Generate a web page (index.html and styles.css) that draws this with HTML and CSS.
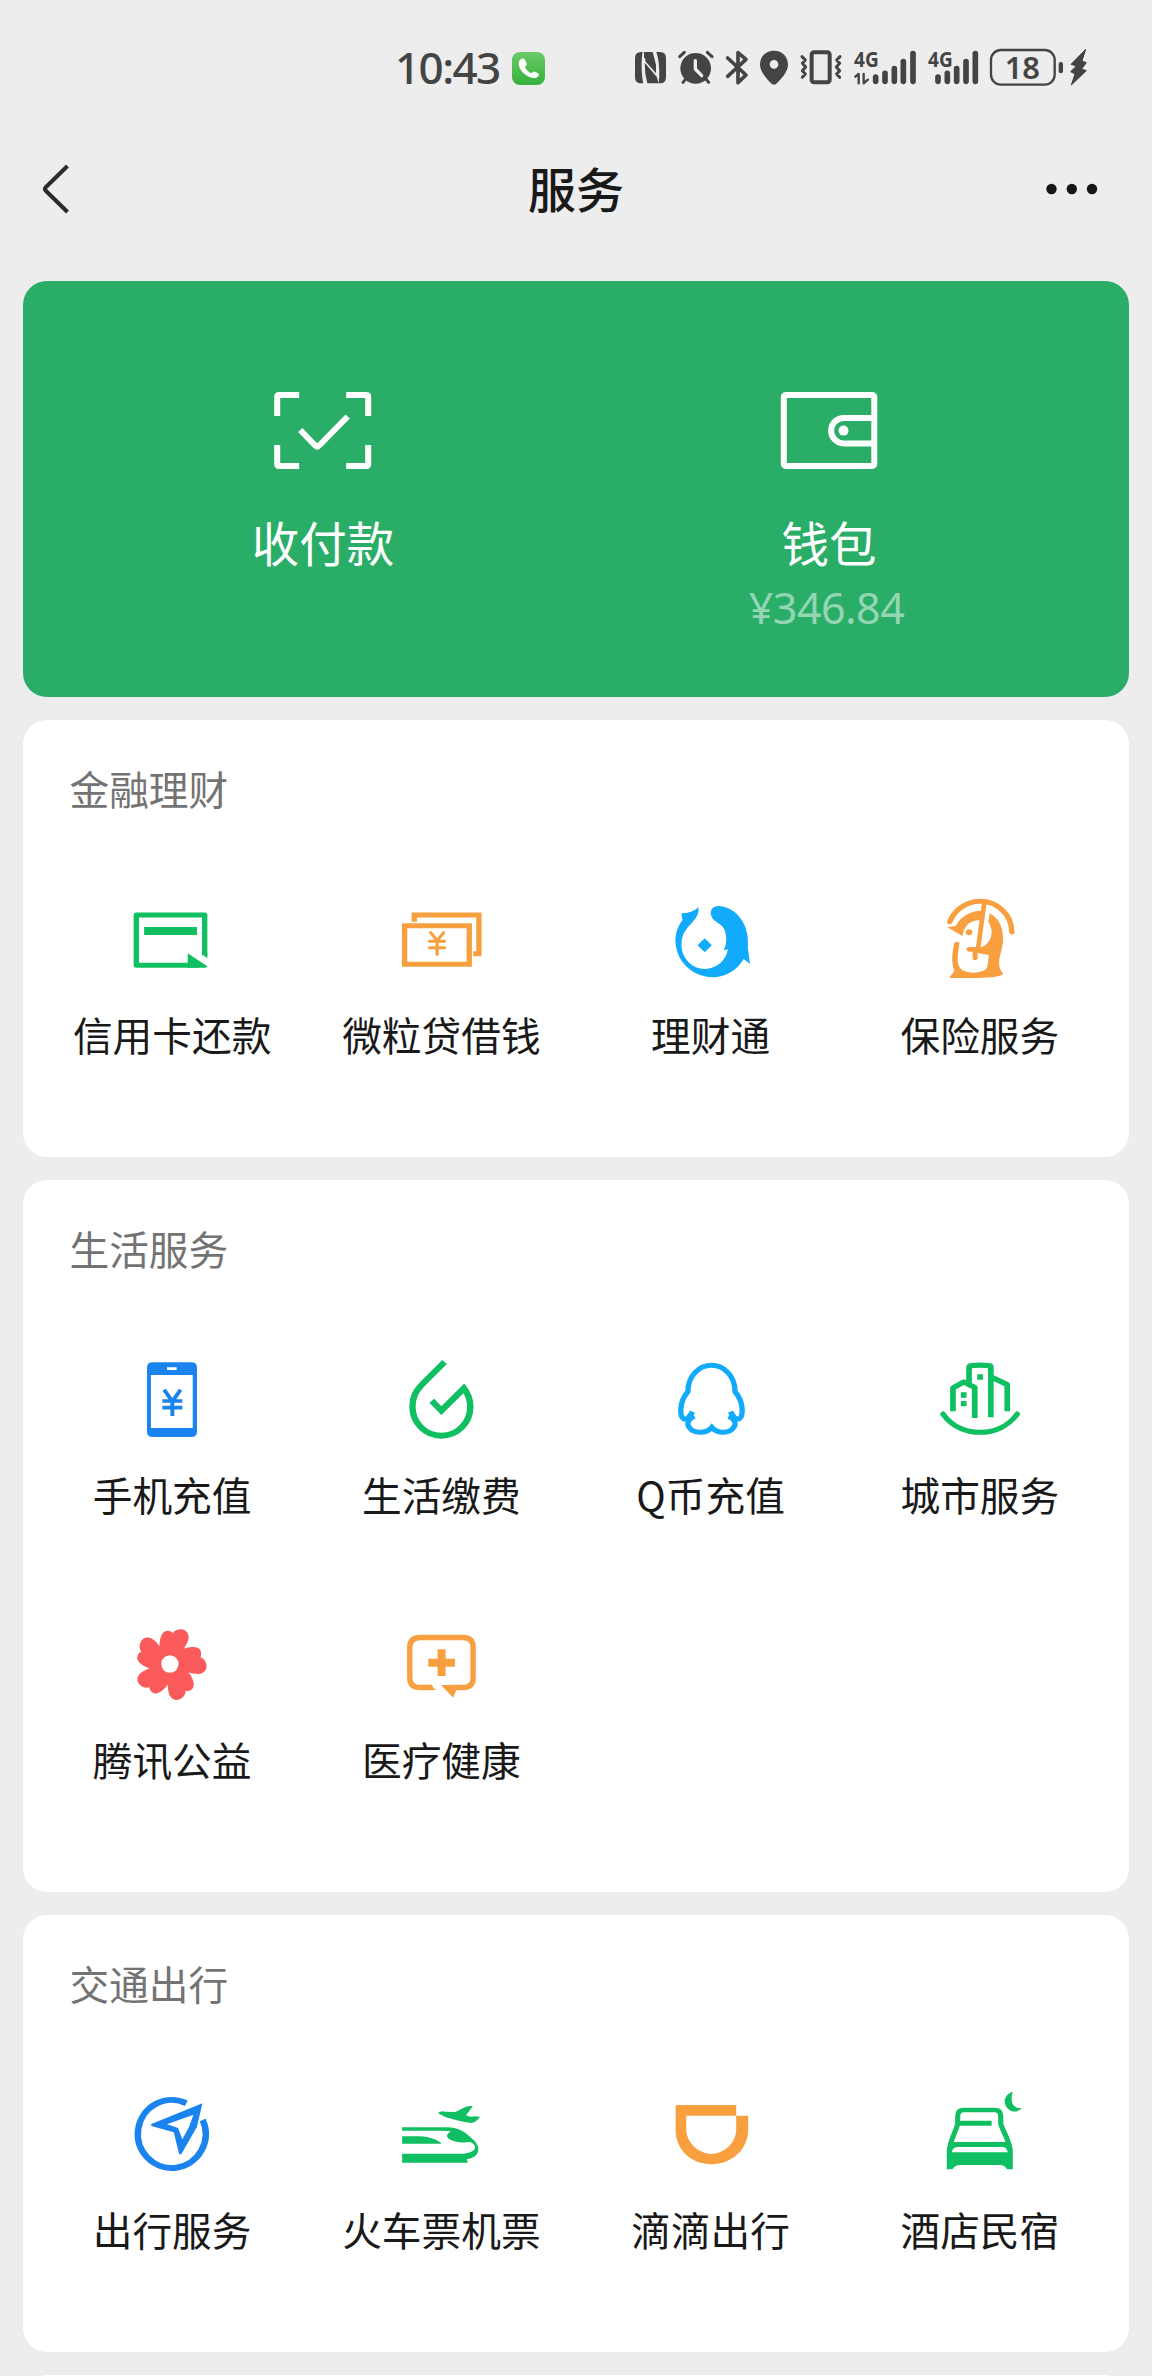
FILE: index.html
```html
<!DOCTYPE html>
<html lang="zh-CN">
<head>
<meta charset="utf-8">
<title>服务</title>
<link rel="stylesheet" href="styles.css">
</head>
<body>
<div class="page">
  <div class="status">
    <span class="clock">10:43</span>
    <svg class="call" width="33" height="40" viewBox="396 54 99 120">
      <defs><linearGradient id="call-bg" x1="0" y1="0" x2="0" y2="1"><stop offset="0" stop-color="#6ccb69"/><stop offset="1" stop-color="#35b13c"/></linearGradient></defs>
      <rect x="396" y="66" width="99" height="99" rx="24" fill="url(#call-bg)"/>
      <path fill="#fff" d="M418 92C424 84 432 84 435 90L440 101C442 106 435 108 435 112C437 118 446 127 452 129C457 129 460 123 465 125L474 130C479 134 475 142 468 144C446 148 408 118 418 92Z"/>
    </svg>
    <div class="signals">
      <svg class="nfc" width="31" height="40" viewBox="45 54 93 120">
        <path fill="#444" d="M63 66H68C63 90 64 135 70 160H63Q45 160 45 142V84Q45 66 63 66Z"/>
        <path fill="#444" d="M72 66H98L108 104V130L72 82ZM74 98L110 140L116 160H82Q74 132 74 98ZM76 84L108 124V130L76 94ZM109 66H120Q138 66 138 84V142Q138 160 120 160H116C120 130 118 92 109 66Z"/>
      </svg>
      <svg class="alarm" width="36" height="40" viewBox="175 54 108 120">
        <circle cx="228" cy="115" r="46" fill="#444"/>
        <path class="ink" stroke-width="9" d="M180 80L194 67M263 67L277 80M190 157L199 146M267 157L258 146"/>
        <path stroke="#ededed" stroke-width="10" fill="none" stroke-linecap="round" stroke-linejoin="round" d="M227 92V117L246 137"/>
      </svg>
      <svg class="bt" width="22" height="40" viewBox="318 54 66 120">
        <path class="ink" stroke-width="11" d="M323 84L378 135L354 158V68L378 88L323 139"/>
      </svg>
      <svg class="pin" width="28" height="40" viewBox="420 54 84 120">
        <path fill="#444" fill-rule="evenodd" d="M462 62C487 62 504 80 504 104C504 125 482 149 469 161Q462 166 455 161C442 149 420 125 420 104C420 80 437 62 462 62ZM462 90A13 13 0 1 0 462 116A13 13 0 1 0 462 90Z"/>
      </svg>
      <svg class="vibrate" width="42" height="40" viewBox="540 54 126 120">
        <rect x="575" y="67" width="54" height="90" rx="7" class="ink" stroke-width="12"/>
        <path class="ink" stroke-width="9" d="M546 80L556 90L547 100L557 111L547 122L556 132L547 142M660 80L650 90L659 100L649 111L659 122L650 132L659 142"/>
      </svg>
      <svg class="sig-a" width="62" height="40" viewBox="702 54 186 120">
        <text class="net" x="702" y="110" textLength="74" lengthAdjust="spacingAndGlyphs">4G</text>
        <path class="ink" stroke-width="7" d="M706 140L716 132V160M731 132V160L744 149"/>
        <path class="ink" stroke-width="17" d="M767 141V154M795 130V154M823 116V154M850 95V154M879 71V154"/>
      </svg>
      <svg class="sig-b" width="50" height="40" viewBox="924 54 150 120">
        <text class="net" x="924" y="110" textLength="74" lengthAdjust="spacingAndGlyphs">4G</text>
        <path class="ink" stroke-width="17" d="M954 141V154M982 130V154M1010 116V154M1038 95V154M1066 71V154"/>
      </svg>
      <svg class="battery" width="74" height="40" viewBox="1110 54 222 120">
        <rect x="1113" y="60" width="191" height="104" rx="30" class="ink" stroke-width="7"/>
        <rect x="1316" y="96" width="13" height="34" rx="6" fill="#444"/>
        <text class="level" x="1154" y="146" textLength="106" lengthAdjust="spacingAndGlyphs">18</text>
      </svg>
      <svg class="bolt" width="17" height="40" viewBox="1350 54 51 120">
        <path fill="#444" stroke="#444" stroke-width="3" stroke-linejoin="round" d="M1397 58L1353 103L1369 108L1352 125L1365 132L1354 165L1399 122L1385 117L1399 98L1386 93Z"/>
      </svg>
    </div>
  </div>

  <div class="navbar">
    <svg width="30" height="52" viewBox="41 163 30 52"><path fill="none" stroke="#2b2b2b" stroke-width="4" d="M67.500 166L46 187Q44 189 46 191L67.500 212"/></svg>
    <h1>服务</h1>
    <svg width="54" height="52" viewBox="1045 163 54 52"><g fill="#161616"><circle cx="1051.500" cy="189" r="5.200"/><circle cx="1071.800" cy="189" r="5.200"/><circle cx="1092" cy="189" r="5.200"/></g></svg>
  </div>

  <main class="cards">
    <section class="pay">
      <div class="pay-item">
        <svg width="100" height="80" viewBox="272.800 390 100 80"><g fill="none" stroke="#fff" stroke-width="6">
          <path d="M277 416V397Q277 395 279 395H299M346 395H366Q368 395 368 397V416M277 445V464Q277 466 279 466H299M346 466H366Q368 466 368 464V445"/>
          <path d="M300 430L315 445.500Q317 447.500 319 445.500L347.500 416.500"/></g></svg>
        <span class="pay-name">收付款</span>
      </div>
      <div class="pay-item">
        <svg width="100" height="80" viewBox="779.700 390 100 80"><g fill="none" stroke="#fff" stroke-width="6">
          <rect x="784.500" y="395" width="90.500" height="71" rx="2"/>
          <path d="M875 418H844.500A12.700 12.700 0 0 0 844.500 443.400H875"/></g><circle cx="844.200" cy="430.600" r="5" fill="#fff"/></svg>
        <span class="pay-name">钱包</span>
        <span class="balance">¥346.84</span>
      </div>
    </section>

    <section class="card">
      <h2>金融理财</h2>
      <div class="grid">
        <div class="item">
          <svg class="icon green" viewBox="300 585 252 270" preserveAspectRatio="none"><path class="line" stroke-width="15" stroke-linejoin="round" d="M517.500 766V645H326V796H500"/><path d="M510 758H525V775L510 763ZM470 760L525 799Q524 803 519 803.500H470ZM348 681H496V705H348Z"/></svg>
          <span>信用卡还款</span>
        </div>
        <div class="item">
          <svg class="icon orange" viewBox="1053.900 585 252 270" preserveAspectRatio="none"><path class="line" stroke-width="15" d="M1078 677H1259V793H1078ZM1105 665V645H1286V761H1270"/><path class="line" stroke-width="9" stroke-linecap="round" d="M1151 698L1169 722L1187 698M1169 722V763M1148 724H1190M1148 743H1190"/></svg>
          <span>微粒贷借钱</span>
        </div>
        <div class="item">
          <svg class="icon sky" viewBox="239.700 105 252 270" preserveAspectRatio="none"><path d="M283 160Q312 160 331 142Q333 165 315 185C292 210 283 225 283 255A65 72 0 0 0 348 327C382 326 408 302 413 268L401 271C412 250 409 225 403 208C395 187 365 185 365 158C366 142 378 138 390 138C435 142 470 190 469 245V265L475 312L457 297C440 330 405 352 370 352C310 350 266 300 266 240C267 215 275 195 286 180Q283 170 283 160ZM348 235L368 256L348 277L328 256Z"/></svg>
          <span>理财通</span>
        </div>
        <div class="item">
          <svg class="icon orange" viewBox="993.700 105 252 270" preserveAspectRatio="none"><path class="line" stroke-width="15" stroke-linecap="round" d="M1035 185C1050 146 1085 124 1120 124C1170 124 1208 165 1209 216"/><path class="line" stroke-width="13" d="M1132 126L1114 268"/><path class="line" stroke-width="14" stroke-linecap="round" d="M1089 268H1120M1106 270V294"/><path d="M1028 202L1052 198C1065 170 1090 152 1127 152L1124 180C1092 180 1074 197 1071 228ZM1147 160C1172 175 1185 200 1184 240C1183 280 1160 310 1185 342C1170 355 1120 354 1033 354L1048 333C1038 305 1042 275 1048 249Q1056 242 1062 249C1060 275 1050 310 1067 328C1085 342 1125 342 1138 325Q1143 312 1144 285L1100 276V262H1120C1150 255 1162 215 1143 186Z"/><circle cx="1089" cy="217" r="9"/></svg>
          <span>保险服务</span>
        </div>
      </div>
    </section>

    <section class="card tall">
      <h2>生活服务</h2>
      <div class="grid">
        <div class="item">
          <svg class="icon blue" viewBox="300 465 252 270" preserveAspectRatio="none"><path fill-rule="evenodd" d="M372 487H480Q496 487 496 503V695Q496 711 480 711H372Q356 711 356 695V503Q356 487 372 487ZM367 525V684H484V525ZM412 502V510H439V502Z"/><path class="line" stroke-width="11" d="M404 569L427 604L450 569M427 600V648M399 603H455M399 623H455"/></svg>
          <span>手机充值</span>
        </div>
        <div class="item">
          <svg class="icon green" viewBox="1053.900 465 252 270" preserveAspectRatio="none"><path class="line" stroke-width="18" d="M1190 486L1128 552C1110 572 1100 590 1100 620A81 87 0 0 0 1262 620C1262 600 1256 582 1244 565L1181 632L1154 602"/></svg>
          <span>生活缴费</span>
        </div>
        <div class="item">
          <svg class="icon sky" viewBox="239.700 105 252 270" preserveAspectRatio="none"><path class="line" stroke-width="15" stroke-linejoin="round" d="M314 275C308 288 298 299 290 297C278 290 275 248 301 215C301 168 332 136 367 136C402 136 433 168 433 215C459 248 456 290 444 297C436 299 426 288 420 275"/><path class="line" stroke-width="15" d="M319 289C300 298 298 312 304 321C316 342 352 342 368 322C384 342 418 342 430 321C436 312 434 298 415 289"/></svg>
          <span>Q币充值</span>
        </div>
        <div class="item">
          <svg class="icon green" viewBox="993.700 105 252 270" preserveAspectRatio="none"><path class="line" stroke-width="16" stroke-linejoin="round" d="M1044 274V204L1074 186L1105 202V294M1089 195V142Q1090 137 1096 137Q1120 134 1144 137Q1150 137 1150 142V292M1155 173L1196 194V274"/><path class="line" stroke-width="15" stroke-linecap="round" d="M1016 282C1040 318 1078 337 1120 337C1162 337 1200 318 1224 282"/><path d="M1112 163H1128V179H1112ZM1066 217H1082V233H1066ZM1066 243H1082V259H1066Z"/></svg>
          <span>城市服务</span>
        </div>
        <div class="item">
          <svg class="icon red" viewBox="201.300 90 270 270"><defs><path id="petal" d="M316 222L300 180C296 150 305 122 322 122C330 122 336 126 339 129C345 120 355 118 362 118C382 119 389 135 385 150C382 160 376 168 372 176L344 222Z"/></defs><use href="#petal"/><use href="#petal" transform="rotate(72 330 222)"/><use href="#petal" transform="rotate(144 330 222)"/><use href="#petal" transform="rotate(216 330 222)"/><use href="#petal" transform="rotate(288 330 222)"/><circle cx="330" cy="222" r="55"/><circle cx="330" cy="222" r="26" fill="#fff"/></svg>
          <span>腾讯公益</span>
        </div>
        <div class="item">
          <svg class="icon orange" viewBox="1009.200 90 270 270"><path class="line" stroke-width="16" d="M1118 292.500H1082Q1050.500 292.500 1050.500 263V172Q1050.500 142.500 1082 142.500H1210Q1240.500 142.500 1240.500 172V263Q1240.500 292.500 1210 292.500H1170"/><path d="M1114 285L1129 300H1114ZM1144 285H1175L1190 300L1181 323ZM1134 178H1158V206H1186V230H1158V258H1134V230H1106V206H1134Z"/></svg>
          <span>医疗健康</span>
        </div>
      </div>
    </section>

    <section class="card">
      <h2>交通出行</h2>
      <div class="grid">
        <div class="item">
          <svg class="icon blue" viewBox="300 450 252 270" preserveAspectRatio="none"><path class="line" stroke-width="18" d="M466 489.700A95 102 0 1 0 512 540"/><path d="M508 546L518 536L523 548L517 560Z"/><path fill-rule="evenodd" d="M511 490L368 552V558L431 577L446 643H452L496 560ZM486 524L412 553L443 564L455 598L474 560Z"/></svg>
          <span>出行服务</span>
        </div>
        <div class="item">
          <svg class="icon green" viewBox="1053.900 450 252 270" preserveAspectRatio="none"><path d="M1171 519Q1180 512 1192 515L1220 516L1250 500Q1262 496 1269 499L1250 526Q1262 533 1274 529L1289 530Q1280 546 1265 549C1240 546 1205 535 1190 530ZM1071 562H1195C1235 562 1250 580 1268 597C1294 620 1290 652 1252 658L1255 668H1071V641H1240C1280 638 1284 618 1262 606C1240 610 1203 605 1197 590C1196 582 1203 578 1207 574Q1198 572 1180 572H1071ZM1071 589H1120C1150 590 1175 602 1181 611H1071Z"/></svg>
          <span>火车票机票</span>
        </div>
        <div class="item">
          <svg class="icon orange" viewBox="235.600 90 246.700 270" preserveAspectRatio="none"><path d="M266 135H428V167H291V210C293 250 325 280 360 282C395 280 427 250 428 210V167H461V210C460 270 415 312 360 313C305 312 262 270 262 210V139Q262 135 266 135Z"/></svg>
          <span>滴滴出行</span>
        </div>
        <div class="item">
          <svg class="icon green" viewBox="973.800 90 246.700 270" preserveAspectRatio="none"><path class="line" stroke-width="14" d="M1014 265C1018 235 1029 220 1036 192V168Q1036 150 1053 150H1137Q1154 150 1154 168V192C1163 220 1174 235 1179 265"/><path class="line" stroke-width="15" d="M1036 190H1129"/><path fill-rule="evenodd" d="M1006 270Q1010 246 1025 246H1168Q1187 250 1187 270V328H1171Q1165 316 1155 315H1040Q1028 316 1022 328H1006ZM1020 277H1173Q1171 261 1158 261H1035Q1022 262 1020 277ZM1187 95C1160 105 1158 135 1178 150C1190 158 1205 155 1211 144C1188 147 1178 125 1187 95Z"/></svg>
          <span>酒店民宿</span>
        </div>
      </div>
    </section>
    <section class="card"></section>
  </main>
</div>
</body>
</html>
```
FILE: styles.css
```css
* { box-sizing: border-box; }

body {
  margin: 0;
  background: #ededed;
  color: #191919;
  font-family: "Noto Sans CJK SC", "Noto Sans", sans-serif;
}

.page {
  width: 1152px;
  height: 2376px;
  overflow: hidden;
}

/* status bar */
.status {
  display: flex;
  align-items: flex-start;
  height: 140px;
  padding: 48px 65px 0 395px;
}
.status svg { display: block; flex: none; overflow: visible; }
.clock {
  width: 117px;
  margin-top: -1px;
  font: 500 44px/40px "Noto Sans", sans-serif;
  letter-spacing: -1.6px;
  color: #444;
}
.signals { display: flex; margin-left: 90px; }
.alarm { margin-left: 12px; }
.bt { margin-left: 12px; }
.pin { margin-left: 12px; }
.vibrate { margin-left: 12px; }
.sig-a { margin-left: 12px; }
.sig-b { margin-left: 12px; }
.battery { margin-left: 12px; }
.bolt { margin-left: 6px; }
.ink {
  fill: none;
  stroke: #444;
  stroke-linecap: round;
  stroke-linejoin: round;
}
.net { font: 700 66px "Noto Sans", sans-serif; fill: #444; }
.level { font: 600 92px "Noto Sans", sans-serif; fill: #444; }

/* title bar */
.navbar {
  display: flex;
  justify-content: space-between;
  align-items: center;
  height: 98px;
  padding: 0 53px 0 41px;
}
.navbar h1 {
  margin: -5px 0 0 36px;
  font-size: 48px;
  line-height: 60px;
  font-weight: 500;
}

.cards {
  display: flex;
  flex-direction: column;
  gap: 23px;
  padding: 43px 23px 0;
}

/* pay panel */
.pay {
  display: flex;
  height: 416px;
  padding: 109px 47px 0;
  border-radius: 24px;
  background: #2aae67;
  color: #fff;
}
.pay-item {
  display: flex;
  flex: 1;
  flex-direction: column;
  align-items: center;
}
.pay-name {
  margin-top: 40px;
  font-size: 47.500px;
  line-height: 64px;
}
.balance {
  margin: 14px 5px 0 0;
  font: 400 43px/40px "Noto Sans", sans-serif;
  letter-spacing: -0.5px;
  color: #94d6b3;
}

/* service cards */
.card {
  flex: none;
  height: 437px;
  padding: 38px 14.500px 0;
  border-radius: 24px;
  background: #fff;
}
.card.tall { height: 712px; }
.card h2 {
  margin: 0 0 77px 32px;
  font-size: 39.700px;
  line-height: 60px;
  font-weight: 400;
  color: #737373;
}
.grid {
  display: grid;
  grid-template-columns: repeat(4, 1fr);
  row-gap: 96px;
}
.item {
  display: flex;
  flex-direction: column;
  align-items: center;
  font-size: 39.700px;
  line-height: 60px;
  white-space: nowrap;
}
.icon {
  width: 90px;
  height: 90px;
  margin-bottom: 19px;
  fill: currentColor;
}
.line { fill: none; stroke: currentColor; }
.item span { color: #191919; }
.green { color: #10bf62; }
.orange { color: #f89f3f; }
.sky { color: #12abfb; }
.blue { color: #1b83ee; }
.red { color: #fa5a5a; }
```
